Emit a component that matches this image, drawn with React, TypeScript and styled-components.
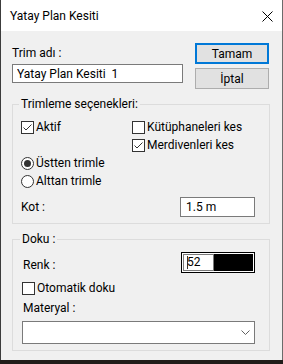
import React from 'react';
import styled, { createGlobalStyle } from 'styled-components';

const GlobalStyle = createGlobalStyle`
  html, body {
    margin: 0;
    padding: 0;
    background: #211c19;
  }
  body {
    font-family: Roboto, "Liberation Sans", sans-serif;
    font-size: 12px;
    color: #000;
  }
`;

const Window = styled.div`
  width: 283px;
  height: 360px;
  box-sizing: border-box;
  border-left: 1px solid #3c3c3c;
  border-right: 1px solid #6b6b6b;
  background: #f0f0f0;
  display: flex;
  flex-direction: column;
`;

const TitleBar = styled.div`
  height: 31px;
  flex-shrink: 0;
  background: #fff;
  display: flex;
  align-items: flex-start;
  justify-content: space-between;
  padding: 9px 9px 0 9px;
  box-sizing: border-box;
  line-height: 15px;
`;

const CloseIcon = styled.svg`
  margin-top: 2px;
`;

const TopRow = styled.div`
  display: flex;
  justify-content: space-between;
  padding: 12px 13px 0 11px;
`;

const NameColumn = styled.div`
  width: 171px;
  display: flex;
  flex-direction: column;
`;

const Caption = styled.div<{ $indent?: number; $top?: number; $bottom?: number }>`
  line-height: 15px;
  margin: ${p => p.$top ?? 3}px 0 ${p => p.$bottom ?? 3}px ${p => p.$indent ?? 0}px;
  white-space: nowrap;
`;

const TextBox = styled.input<{ $width?: number }>`
  width: ${p => (p.$width ? `${p.$width}px` : '100%')};
  height: ${p => (p.$width ? 20 : 19)}px;
  box-sizing: border-box;
  border: 1px solid #7a7a7a;
  background: #fff;
  padding: 0 0 0 ${p => (p.$width ? 5 : 4)}px;
  margin: 0;
  font: inherit;
  color: #000;
  outline: none;
  white-space: pre;
`;

const ButtonColumn = styled.div`
  display: flex;
  flex-direction: column;
  gap: 4px;
`;

const Button = styled.button<{ $default?: boolean }>`
  width: 74px;
  height: 21px;
  box-sizing: border-box;
  background: #e1e1e1;
  border: ${p => (p.$default ? '2px solid #0078d7' : '1px solid #adadad')};
  font: inherit;
  color: #000;
  padding: 0;
  margin: 0;
`;

const Group = styled.fieldset<{ $top: number; $left: number }>`
  margin: 8px 12px 0 11px;
  border: 1px solid #dcdcdc;
  padding: ${p => p.$top}px 14px 6px ${p => p.$left}px;
  min-width: 0;
`;

const Legend = styled.legend`
  padding: 0 2px;
  margin-left: -2px;
  line-height: 15px;
`;

const OptionGrid = styled.div`
  display: grid;
  grid-template-columns: 111px 1fr;
  grid-auto-rows: 13px;
  row-gap: 5px;
`;

const Option = styled.label<{ $col?: number }>`
  display: flex;
  align-items: center;
  gap: 2px;
  height: 13px;
  line-height: 13px;
  white-space: nowrap;
  grid-column: ${p => p.$col ?? 'auto'};
`;

const Box = styled.span<{ $round?: boolean }>`
  width: 13px;
  height: 13px;
  box-sizing: border-box;
  border: 1px solid #333;
  background: #fff;
  border-radius: ${p => (p.$round ? '50%' : '0')};
  display: inline-flex;
  align-items: center;
  justify-content: center;
  flex-shrink: 0;
`;

const Dot = styled.span`
  width: 7px;
  height: 7px;
  border-radius: 50%;
  background: #333;
`;

const FieldRow = styled.div<{ $gap: number; $height: number }>`
  display: flex;
  align-items: center;
  justify-content: space-between;
  margin-top: ${p => p.$gap}px;
  height: ${p => p.$height}px;
`;

const ColorFrame = styled.div`
  display: flex;
  width: 74px;
  height: 21px;
  box-sizing: border-box;
  border: 1px solid #000;
  background: #fff;
  padding: 1px;
`;

const ColorEdit = styled.div`
  width: 31px;
  box-sizing: border-box;
  border: 1px solid #7a7a7a;
  background: #fff;
  padding-left: 3px;
  display: flex;
  align-items: center;
  line-height: 15px;
`;

const Caret = styled.span`
  width: 1px;
  height: 13px;
  background: #333;
  margin-right: -1px;
`;

const Swatch = styled.div`
  flex: 1;
  background: #000;
`;

const Select = styled.div`
  height: 23px;
  box-sizing: border-box;
  border: 1px solid #7a7a7a;
  background: #fff;
  display: flex;
  align-items: center;
  justify-content: flex-end;
  padding-right: 4px;
`;

const Check = () => (
  <svg width="11" height="11" viewBox="0 0 11 11">
    <path d="M1.5 5.5 L4 8 L9.5 2.5" fill="none" stroke="#333" strokeWidth="1" />
  </svg>
);

const CheckBox = ({ checked, label, col }: { checked?: boolean; label: string; col?: number }) => (
  <Option $col={col}>
    <Box>{checked && <Check />}</Box>
    <span>{label}</span>
  </Option>
);

const Radio = ({ checked, label }: { checked?: boolean; label: string }) => (
  <Option $col={1}>
    <Box $round>{checked && <Dot />}</Box>
    <span>{label}</span>
  </Option>
);

export default function App() {
  return (
    <>
      <GlobalStyle />
      <Window>
        <TitleBar>
          <span>Yatay Plan Kesiti</span>
          <CloseIcon width="11" height="11" viewBox="0 0 11 11">
            <path d="M0.5 0.5 L10.5 10.5 M10.5 0.5 L0.5 10.5" stroke="#000" strokeWidth="1" />
          </CloseIcon>
        </TitleBar>

        <TopRow>
          <NameColumn>
            <Caption>Trim adı :</Caption>
            <TextBox readOnly value="Yatay Plan Kesiti  1" />
          </NameColumn>
          <ButtonColumn>
            <Button $default>Tamam</Button>
            <Button>İptal</Button>
          </ButtonColumn>
        </TopRow>

        <Group $top={9} $left={8}>
          <Legend>Trimleme seçenekleri:</Legend>
          <OptionGrid>
            <CheckBox checked label="Aktif" col={1} />
            <CheckBox label="Kütüphaneleri kes" col={2} />
            <CheckBox checked label="Merdivenleri kes" col={2} />
            <Radio checked label="Üstten trimle" />
            <Radio label="Alttan trimle" />
          </OptionGrid>
          <FieldRow $gap={9} $height={20}>
            <span>Kot :</span>
            <TextBox readOnly value="1.5 m" $width={75} />
          </FieldRow>
        </Group>

        <Group $top={5} $left={9}>
          <Legend>Doku :</Legend>
          <FieldRow $gap={0} $height={21}>
            <Caption $indent={1} $top={5} $bottom={0}>Renk :</Caption>
            <ColorFrame>
              <ColorEdit>
                <Caret />
                <span>52</span>
              </ColorEdit>
              <Swatch />
            </ColorFrame>
          </FieldRow>
          <FieldRow $gap={9} $height={13}>
            <CheckBox label="Otomatik doku" />
          </FieldRow>
          <Caption $indent={1} $top={6} $bottom={5}>Materyal :</Caption>
          <Select>
            <svg width="9" height="5" viewBox="0 0 9 5">
              <path d="M0.5 0.5 L4.5 4.5 L8.5 0.5" fill="none" stroke="#606060" strokeWidth="1" />
            </svg>
          </Select>
        </Group>
      </Window>
    </>
  );
}
